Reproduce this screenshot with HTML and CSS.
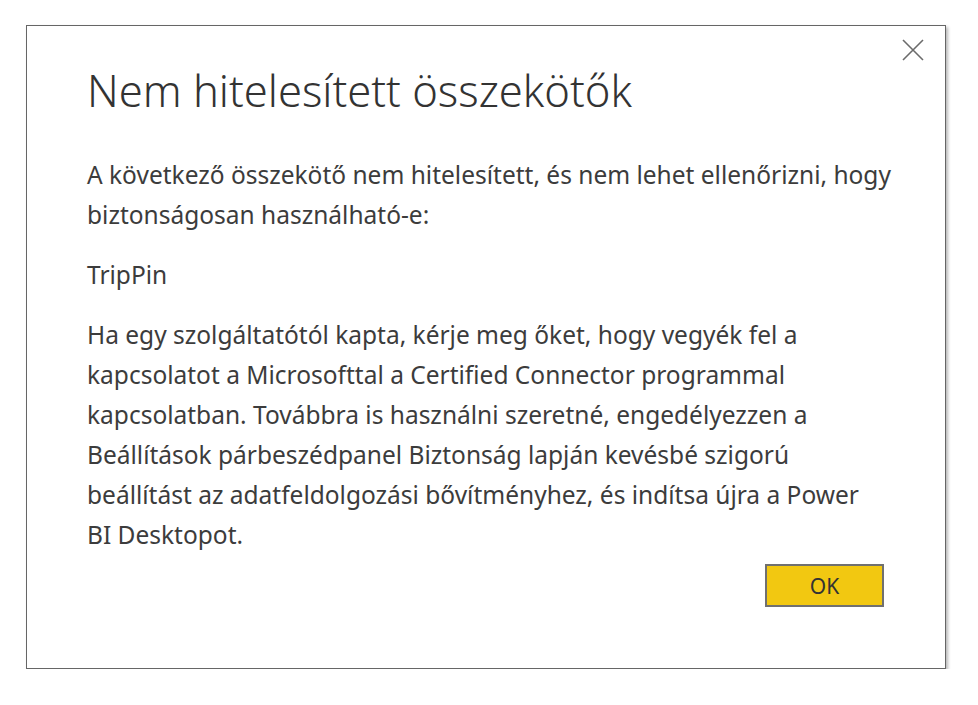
FILE: index.html
```html
<!DOCTYPE html>
<html lang="hu">
<head>
<meta charset="utf-8">
<link rel="stylesheet" href="styles.css">
</head>
<body>
<div class="dialog">
  <button class="close" aria-label="Bezárás">
    <svg width="22" height="22" viewBox="0 0 22 22"><path d="M1 1L21 21M21 1L1 21" stroke="#6b6b6b" stroke-width="1.6" fill="none"/></svg>
  </button>
  <h1 class="title">Nem hitelesített összekötők</h1>
  <p class="text">A következő összekötő nem hitelesített, és nem lehet ellenőrizni, hogy biztonságosan használható-e:</p>
  <p class="text">TripPin</p>
  <p class="text">Ha egy szolgáltatótól kapta, kérje meg őket, hogy vegyék fel a kapcsolatot a Microsofttal a Certified Connector programmal kapcsolatban. Továbbra is használni szeretné, engedélyezzen a Beállítások párbeszédpanel Biztonság lapján kevésbé szigorú beállítást az adatfeldolgozási bővítményhez, és indítsa újra a Power BI&nbsp;Desktopot.</p>
  <div class="actions">
    <button class="ok">OK</button>
  </div>
</div>
</body>
</html>
```
FILE: styles.css
```css
html, body {
  margin: 0;
  padding: 0;
  background: #ffffff;
}
body {
  font-family: "Noto Sans", "Open Sans", sans-serif;
  color: #3c3c3c;
}
.dialog {
  position: relative;
  box-sizing: border-box;
  margin: 25px 0 0 26px;
  width: 920px;
  height: 644px;
  border: 1px solid #666;
  background: #fff;
  box-shadow: 2px 2px 3px rgba(0,0,0,0.28);
  padding: 0 53px 0 60px;
}
.close {
  position: absolute;
  top: 13px;
  right: 21px;
  border: 0;
  background: transparent;
  padding: 0;
  width: 22px;
  height: 22px;
  cursor: pointer;
}
.close svg { display: block; }
.title {
  margin: 36px 0 37px;
  font-size: 43.5px;
  font-weight: 300;
  line-height: 56px;
  color: #333;
}
.text {
  margin: 0 0 20px;
  font-size: 24.5px;
  line-height: 40px;
}
.text:last-of-type {
  margin-bottom: 9px;
}
.actions {
  display: flex;
  justify-content: flex-end;
  padding-right: 8px;
}
.ok {
  box-sizing: border-box;
  width: 119px;
  height: 43px;
  background: #f2c811;
  border: 2px solid #707070;
  font-family: inherit;
  font-size: 21px;
  color: #333;
}
```
